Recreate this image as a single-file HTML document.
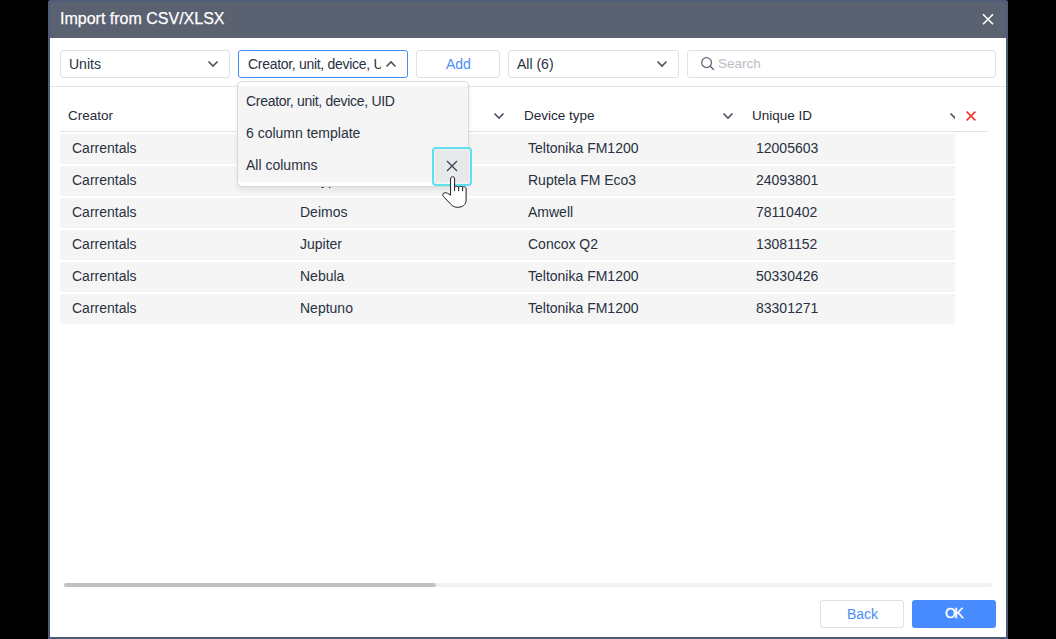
<!DOCTYPE html>
<html><head><meta charset="utf-8">
<style>
*{box-sizing:border-box;margin:0;padding:0}
html,body{width:1056px;height:639px;overflow:hidden;background:#000;font-family:"Liberation Sans",sans-serif;color:#283142}
.abs{position:absolute}
#dlg{position:absolute;left:48px;top:0;width:960px;height:639px;border:2px solid #4f5c78;border-radius:3px 3px 0 0;background:#fff;overflow:hidden}
#hdr{position:absolute;left:48px;top:0;width:960px;height:38px;background:#5a6170;border:2px solid #4f5c78;border-bottom:none;border-radius:3px 3px 0 0}
.title{position:absolute;left:60px;top:10px;font-size:16px;color:#fff;white-space:nowrap;-webkit-text-stroke:0.25px #fff}
.box{position:absolute;top:50px;height:28px;border:1px solid #dfe1e6;border-radius:3px;background:#fff}
.txt{position:absolute;font-size:14px;white-space:nowrap;line-height:16px}
.sep{position:absolute;left:50px;width:956px;height:1px;background:#e3e5e8}
.row{position:absolute;left:60px;width:895px;height:30px;background:#f5f5f5;border-radius:3px 0 0 3px}
.rowr{position:absolute;left:955px;width:33px;height:30px;border-radius:0 3px 3px 0;border:none}
</style></head><body>
<div id="dlg"></div>
<div id="hdr"></div>
<div class="title">Import from CSV/XLSX</div>
<svg class="abs" style="left:982px;top:13px" width="12" height="12" viewBox="0 0 12 12"><path d="M1 1.2L11 11.2M11 1.2L1 11.2" stroke="#fff" stroke-width="1.6" fill="none"/></svg>

<!-- toolbar -->
<div class="box" style="left:60px;width:170px"></div>
<div class="txt" style="left:69px;top:56px">Units</div>
<svg class="abs" style="left:207px;top:60px" width="12" height="8" viewBox="0 0 12 8"><path d="M1.5 1.5L6 6L10.5 1.5" stroke="#4a5060" stroke-width="1.6" fill="none"/></svg>

<div class="box" style="left:238px;width:170px;border-color:#3f8cf4"></div>
<div class="txt" style="left:248px;top:56px;width:133px;overflow:hidden;letter-spacing:-0.3px">Creator, unit, device, UID</div>
<svg class="abs" style="left:385px;top:60px" width="12" height="8" viewBox="0 0 12 8"><path d="M1.5 6.5L6 2L10.5 6.5" stroke="#4a5060" stroke-width="1.6" fill="none"/></svg>

<div class="box" style="left:416px;width:84px"></div>
<div class="txt" style="left:446px;top:56px;color:#4a8ef5;font-size:14px">Add</div>

<div class="box" style="left:508px;width:171px"></div>
<div class="txt" style="left:517px;top:56px">All (6)</div>
<svg class="abs" style="left:656px;top:60px" width="12" height="8" viewBox="0 0 12 8"><path d="M1.5 1.5L6 6L10.5 1.5" stroke="#4a5060" stroke-width="1.6" fill="none"/></svg>

<div class="box" style="left:687px;width:309px"></div>
<svg class="abs" style="left:700px;top:56px" width="16" height="16" viewBox="0 0 16 16"><circle cx="6.6" cy="6.6" r="4.9" stroke="#5d6474" stroke-width="1.25" fill="none"/><path d="M10.2 10.2L13.8 13.8" stroke="#5d6474" stroke-width="1.4"/></svg>
<div class="txt" style="left:718px;top:56px;color:#b9bdc5;font-size:13.5px">Search</div>

<div class="sep" style="top:86px"></div>

<!-- table header -->
<div class="txt" style="left:68px;top:108px;font-size:13.5px;color:#1f2937">Creator</div>
<svg class="abs" style="left:493px;top:112px" width="12" height="8" viewBox="0 0 12 8"><path d="M1.5 1.5L6 6L10.5 1.5" stroke="#4a5060" stroke-width="1.6" fill="none"/></svg>
<div class="txt" style="left:524px;top:108px;font-size:13.5px;color:#1f2937">Device type</div>
<svg class="abs" style="left:722px;top:112px" width="12" height="8" viewBox="0 0 12 8"><path d="M1.5 1.5L6 6L10.5 1.5" stroke="#4a5060" stroke-width="1.6" fill="none"/></svg>
<div class="txt" style="left:752px;top:108px;font-size:13.5px;color:#1f2937">Unique ID</div>
<div class="abs" style="left:949px;top:112px;width:6px;height:8px;overflow:hidden"><svg style="display:block" width="12" height="8" viewBox="0 0 12 8"><path d="M1.5 1.5L6 6L10.5 1.5" stroke="#4a5060" stroke-width="1.6" fill="none"/></svg></div>
<svg class="abs" style="left:965px;top:110px" width="12" height="12" viewBox="0 0 12 12"><path d="M1.6 1.6L10.4 10.4M10.4 1.6L1.6 10.4" stroke="#f23c38" stroke-width="1.8" fill="none"/></svg>
<div class="abs" style="left:60px;top:131px;width:928px;height:1px;background:#e1e3e7"></div>

<!-- rows -->
<div class="row" style="top:134px"></div><div class="rowr" style="top:134px"></div>
<div class="txt" style="left:72px;top:140px">Carrentals</div>
<div class="txt" style="left:528px;top:140px">Teltonika FM1200</div>
<div class="txt" style="left:756px;top:140px">12005603</div>
<div class="row" style="top:166px"></div><div class="rowr" style="top:166px"></div>
<div class="txt" style="left:72px;top:172px">Carrentals</div>
<div class="txt" style="left:300px;top:172px">Calypso</div>
<div class="txt" style="left:528px;top:172px">Ruptela FM Eco3</div>
<div class="txt" style="left:756px;top:172px">24093801</div>
<div class="row" style="top:198px"></div><div class="rowr" style="top:198px"></div>
<div class="txt" style="left:72px;top:204px">Carrentals</div>
<div class="txt" style="left:300px;top:204px">Deimos</div>
<div class="txt" style="left:528px;top:204px">Amwell</div>
<div class="txt" style="left:756px;top:204px">78110402</div>
<div class="row" style="top:230px"></div><div class="rowr" style="top:230px"></div>
<div class="txt" style="left:72px;top:236px">Carrentals</div>
<div class="txt" style="left:300px;top:236px">Jupiter</div>
<div class="txt" style="left:528px;top:236px">Concox Q2</div>
<div class="txt" style="left:756px;top:236px">13081152</div>
<div class="row" style="top:262px"></div><div class="rowr" style="top:262px"></div>
<div class="txt" style="left:72px;top:268px">Carrentals</div>
<div class="txt" style="left:300px;top:268px">Nebula</div>
<div class="txt" style="left:528px;top:268px">Teltonika FM1200</div>
<div class="txt" style="left:756px;top:268px">50330426</div>
<div class="row" style="top:294px"></div><div class="rowr" style="top:294px"></div>
<div class="txt" style="left:72px;top:300px">Carrentals</div>
<div class="txt" style="left:300px;top:300px">Neptuno</div>
<div class="txt" style="left:528px;top:300px">Teltonika FM1200</div>
<div class="txt" style="left:756px;top:300px">83301271</div>

<!-- scrollbar -->
<div class="abs" style="left:64px;top:583px;width:928px;height:4px;background:#f1f1f1;border-radius:2px"></div>
<div class="abs" style="left:64px;top:583px;width:372px;height:4px;background:#c1c1c1;border-radius:2px"></div>

<!-- footer -->
<div class="abs" style="left:820px;top:600px;width:84px;height:28px;border:1px solid #dfe1e6;border-radius:3px;background:#fff"></div>
<div class="txt" style="left:847px;top:606px;font-size:14px;color:#4a8ef5">Back</div>
<div class="abs" style="left:912px;top:600px;width:84px;height:28px;background:#478bfe;border-radius:3px"></div>
<div class="txt" style="left:945px;top:605px;font-size:14px;color:#fff;-webkit-text-stroke:0.35px #fff;letter-spacing:-1.6px">OK</div>

<!-- dropdown -->
<div class="abs" style="left:237px;top:81px;width:232px;height:106px;background:#fff;border:1px solid #d9d9db;border-radius:5px;box-shadow:0 3px 5px rgba(0,0,0,0.08)"></div><div class="abs" style="left:238px;top:86px;width:230px;height:96px;background:#f5f5f5"></div>
<div class="txt" style="left:246px;top:93px;letter-spacing:-0.3px">Creator, unit, device, UID</div>
<div class="txt" style="left:246px;top:125px">6 column template</div>
<div class="txt" style="left:246px;top:157px">All columns</div>
<div class="abs" style="left:432px;top:147px;width:40px;height:39px;background:#f1f1f2;border:2.5px solid #5fe0ef;border-radius:4px"></div><div class="abs" style="left:435px;top:149.5px;width:34px;height:32.5px;background:#e8e9eb"></div>
<svg class="abs" style="left:446px;top:160px" width="12" height="12" viewBox="0 0 12 12"><path d="M1 1L11 11M11 1L1 11" stroke="#3b4150" stroke-width="1.3" fill="none"/></svg>
<svg class="abs" style="left:440px;top:174px" width="30" height="36" viewBox="0 0 30 36"><path d="M10.6 21.2L10.6 5C10.6 3.2 11.6 2.8 12.6 2.8C13.6 2.8 14.6 3.2 14.6 5L14.6 12.8C15.3 12.2 18 12.2 18.7 13C19.5 12.2 21.9 12.2 22.6 13C23.4 12.4 26.1 12.6 26.1 14.8L26.1 26C26.1 30.8 22.5 33.3 17.7 33.3C14.6 33.3 12.6 32.2 10.8 30.3L3.3 22.3C2.3 21 2.8 18.8 4.7 18.7C6.6 18.6 8.4 19.6 10.6 21.2Z" fill="#fff" stroke="#1b1d24" stroke-width="1" stroke-linejoin="round"/><path d="M14.6 12.8L14.6 17.2M18.7 13L18.7 17.2M22.6 13L22.6 17.2" stroke="#1b1d24" stroke-width="1" fill="none"/></svg>
</body></html>
